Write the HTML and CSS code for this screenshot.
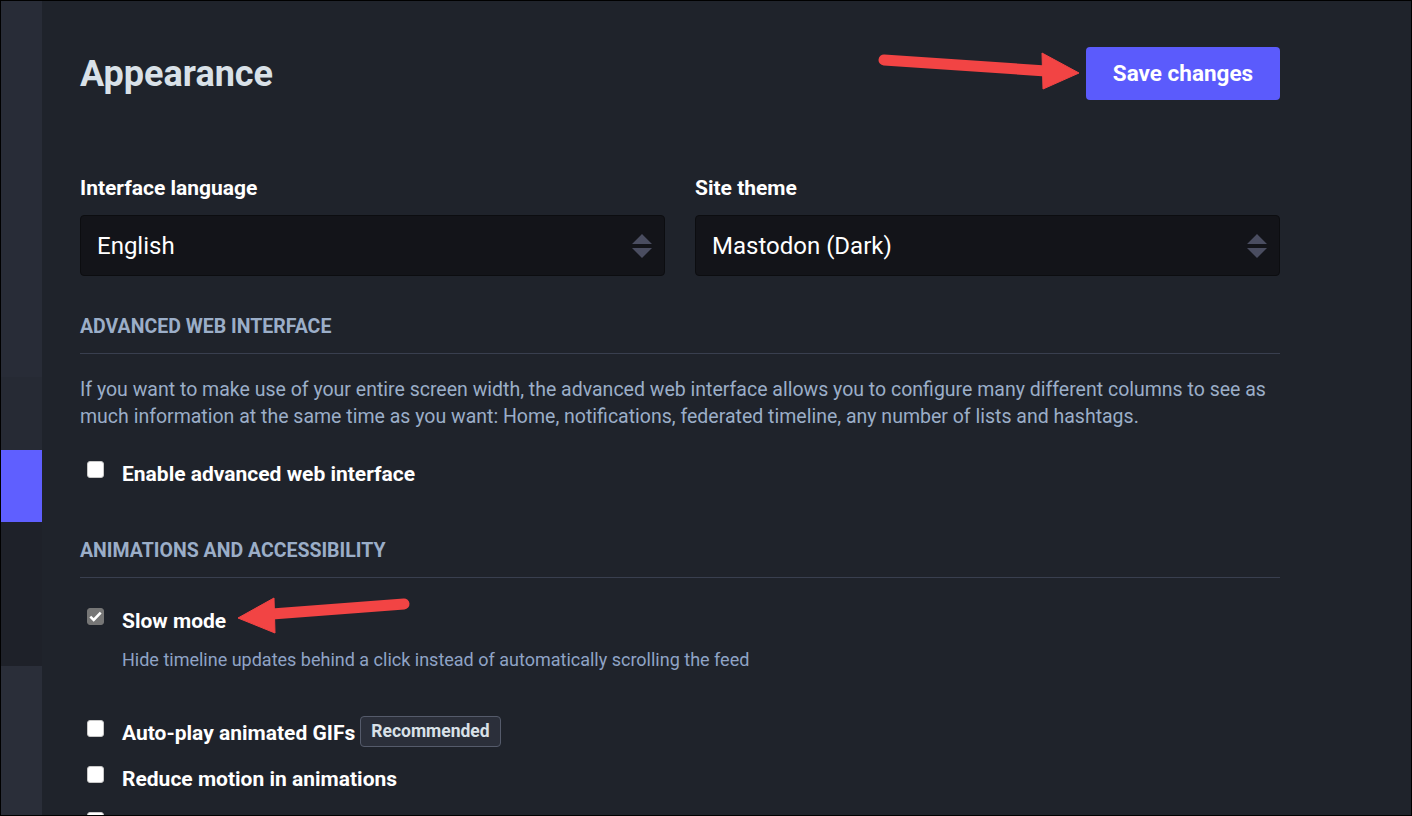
FILE: index.html
```html
<!DOCTYPE html>
<html lang="en">
<head>
<meta charset="utf-8">
<title>Appearance</title>
<link rel="stylesheet" href="styles.css">
</head>
<body>
<div class="frame">
  <aside class="sidebar">
    <div class="sb sb-a"></div>
    <div class="sb sb-b"></div>
    <div class="sb sb-active"></div>
    <div class="sb sb-c"></div>
    <div class="sb sb-d"></div>
  </aside>
  <main class="main">
    <div class="content">
      <header class="header">
        <h1 class="title">Appearance</h1>
        <button class="save">Save changes</button>
      </header>

      <div class="fields">
        <div class="field">
          <label class="label">Interface language</label>
          <div class="select">
            <span>English</span>
            <svg class="updown" width="20" height="24" viewBox="0 0 20 24"><path d="M10 0 L20 10 L0 10 Z M0 14 L20 14 L10 24 Z" fill="#4a4d60"/></svg>
          </div>
        </div>
        <div class="field">
          <label class="label">Site theme</label>
          <div class="select">
            <span>Mastodon (Dark)</span>
            <svg class="updown" width="20" height="24" viewBox="0 0 20 24"><path d="M10 0 L20 10 L0 10 Z M0 14 L20 14 L10 24 Z" fill="#4a4d60"/></svg>
          </div>
        </div>
      </div>

      <h2 class="section">Advanced web interface</h2>
      <p class="desc">If you want to make use of your entire screen width, the advanced web interface allows you to configure many different columns to see as much information at the same time as you want: Home, notifications, federated timeline, any number of lists and hashtags.</p>
      <div class="check-row first">
        <span class="box"></span>
        <span class="check-label">Enable advanced web interface</span>
      </div>

      <h2 class="section sec2">Animations and accessibility</h2>
      <div class="check-row slow">
        <span class="box checked"><svg width="13" height="11" viewBox="0 0 13 11"><path d="M1.3 5.6 L4.7 8.9 L11.7 1.6" fill="none" stroke="#fff" stroke-width="2.6"/></svg></span>
        <span class="check-label">Slow mode</span>
      </div>
      <p class="hint">Hide timeline updates behind a click instead of automatically scrolling the feed</p>
      <div class="check-row gifs">
        <span class="box"></span>
        <span class="check-label">Auto-play animated GIFs</span>
        <span class="badge">Recommended</span>
      </div>
      <div class="check-row motion">
        <span class="box"></span>
        <span class="check-label">Reduce motion in animations</span>
      </div>
      <div class="check-row more">
        <span class="box"></span>
      </div>
    </div>
  </main>
  <svg class="arrows" width="1412" height="816" viewBox="0 0 1412 816">
    <g fill="#f24444" stroke="#f24444">
      <line x1="884" y1="60" x2="1046" y2="71" stroke-width="11" stroke-linecap="round"/>
      <path d="M1042 53 L1079 73 L1043 89 Z" stroke-width="1" stroke-linejoin="round"/>
      <line x1="404" y1="604" x2="272" y2="614" stroke-width="11" stroke-linecap="round"/>
      <path d="M274 598 L238 618 L275 633 Z" stroke-width="1" stroke-linejoin="round"/>
    </g>
  </svg>
</div>
</body>
</html>
```

FILE: styles.css
```css
* { box-sizing: border-box; }
html, body { margin: 0; padding: 0; }
body {
  background: #000;
  font-family: Roboto, "Noto Sans", "Liberation Sans", sans-serif;
  width: 1412px;
  height: 816px;
  overflow: hidden;
}
.frame {
  position: relative;
  width: 1412px;
  height: 816px;
  border: 1px solid #000;
  background: #1f232b;
  display: flex;
  overflow: hidden;
}
.sidebar {
  width: 41px;
  flex: none;
  display: flex;
  flex-direction: column;
}
.sb-a { height: 376px; background: #282c37; }
.sb-b { height: 73px; background: #262a34; }
.sb-active { height: 72px; background: #5f5fff; }
.sb-c { height: 144px; background: #1e2129; }
.sb-d { flex: 1; background: #2a2e39; }
.main {
  flex: 1;
  padding: 46px 0 0 38px;
}
.content { width: 1200px; }
.header {
  display: flex;
  justify-content: space-between;
  align-items: center;
  height: 53px;
}
.title {
  margin: 0;
  font-size: 36px;
  font-weight: 700;
  color: #d9e1e8;
  letter-spacing: 0;
}
.save {
  width: 194px;
  height: 53px;
  border: none;
  border-radius: 4px;
  background: #5b5bfc;
  color: #fff;
  font-family: inherit;
  font-size: 22.5px;
  font-weight: 700;
  padding: 0 0 2px;
}
.fields {
  display: grid;
  grid-template-columns: 1fr 1fr;
  column-gap: 30px;
  margin-top: 76px;
}
.label {
  display: block;
  color: #fff;
  font-size: 21px;
  font-weight: 700;
  line-height: 24px;
  margin-bottom: 15px;
}
.select {
  height: 61px;
  background: #131419;
  border: 1px solid #0c0d10;
  border-radius: 4px;
  display: flex;
  align-items: center;
  justify-content: space-between;
  padding: 0 12px 0 16px;
  color: #fff;
  font-size: 24px;
}
.updown { display: block; }
.section {
  margin: 40px 0 0;
  padding-bottom: 15px;
  border-bottom: 1px solid #393f4f;
  color: #9baec8;
  font-size: 19.5px;
  font-weight: 700;
  text-transform: uppercase;
  line-height: 22px;
}
.desc {
  margin: 22px 0 0;
  color: #9baec8;
  font-size: 19.5px;
  line-height: 27px;
}
.check-row {
  display: flex;
  align-items: center;
  height: 26px;
}
.box {
  width: 17px;
  height: 17px;
  margin: 0 18px 0 7px;
  flex: none;
  background: #fff;
  border: 1px solid #c8c8c8;
  border-radius: 3px;
  display: flex;
  align-items: center;
  justify-content: center;
  align-self: flex-start;
}
.box.checked {
  background: #767676;
  border-color: #767676;
}
.check-label {
  color: #fff;
  font-size: 21px;
  font-weight: 700;
  line-height: 26px;
}
.check-row.first { margin-top: 31px; }
.sec2 { margin-top: 53px; }
.check-row.slow { margin-top: 30px; }
.hint {
  margin: 15px 0 0 42px;
  color: #8fa3c6;
  font-size: 18px;
  line-height: 22px;
}
.check-row.gifs { margin-top: 49px; }
.badge {
  margin-left: 5px;
  border: 1px solid #555b6b;
  background: #2b2f3a;
  border-radius: 4px;
  color: #d9e1e8;
  font-size: 17.5px;
  font-weight: 700;
  line-height: 29px;
  padding: 0 10px;
  margin-top: -3px;
}
.check-row.motion { margin-top: 20px; }
.check-row.more { margin-top: 20px; }
.arrows {
  position: absolute;
  left: -1px;
  top: -1px;
  pointer-events: none;
}
```
